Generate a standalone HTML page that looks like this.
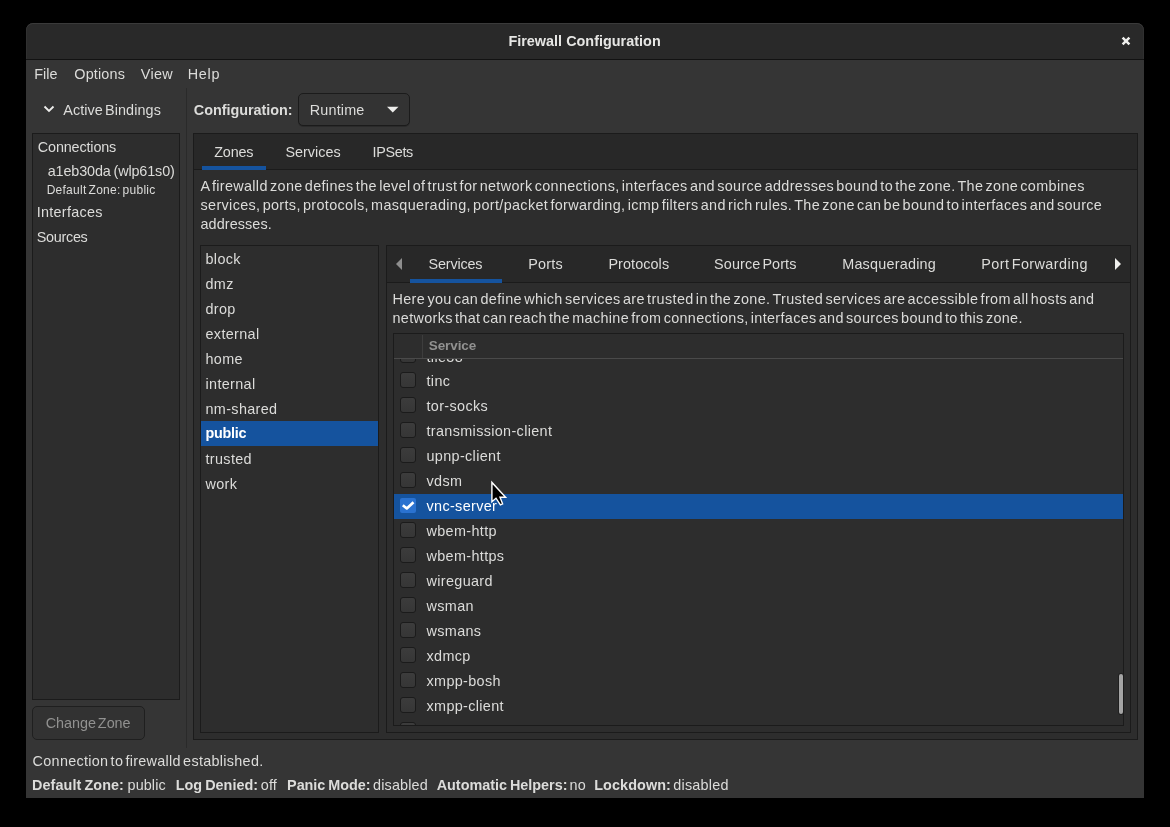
<!DOCTYPE html>
<html><head><meta charset="utf-8">
<style>
html,body{margin:0;padding:0;background:#000;width:1170px;height:827px;overflow:hidden}
body{font-family:"Liberation Sans",sans-serif;font-size:14.4px;color:#dcdcda;position:relative;-webkit-font-smoothing:antialiased;letter-spacing:0.35px;word-spacing:-2.1px}
#root{position:absolute;left:0;top:0;width:1170px;height:827px;will-change:transform}
.a{position:absolute}
.t{position:absolute;white-space:nowrap;line-height:20px;height:20px}
.b{font-weight:bold;letter-spacing:0.08px;word-spacing:-1px}
#win{position:absolute;left:26px;top:23px;width:1118px;height:775px;background:#353535;border-radius:7px 7px 0 0;overflow:hidden}
#title{position:absolute;left:0;top:0;width:1118px;height:36px;background:#292929;border-bottom:1px solid #121212;border-radius:7px 7px 0 0;box-shadow:inset 0 1px 0 #3a3a3a,inset 1px 0 0 #303030,inset -1px 0 0 #303030}
.frame{position:absolute;box-sizing:border-box;border:1px solid #1b1b1b;background:#2d2d2d}
.hdr{position:absolute;background:#282828;border-bottom:1px solid #1b1b1b;box-sizing:border-box}
.ul{position:absolute;background:#15539e;height:4px}
.sel{position:absolute;background:#15539e}
.cb{position:absolute;width:14px;height:14px;border:1px solid #1b1b1b;border-radius:3px;background:linear-gradient(#3c3c3c,#363636)}
</style></head><body><div id="root">
<div id="win">
  <div id="title"></div>
</div>
<!-- title -->
<div class="t b" style="left:508.40px;top:31px;color:#e6e6e4;letter-spacing:0.019px;word-spacing:0">Firewall Configuration</div>
<svg class="a" style="left:1121px;top:36px" width="10" height="10" viewBox="0 0 10 10"><path d="M1.6 1.6L8.4 8.4M8.4 1.6L1.6 8.4" stroke="#eeeeec" stroke-width="2.5" stroke-linecap="butt"/></svg>
<!-- menu -->
<div class="t" style="left:34.30px;top:64px;letter-spacing:-0.017px">File</div>
<div class="t" style="left:74.30px;top:64px;letter-spacing:0.167px">Options</div>
<div class="t" style="left:140.70px;top:64px;letter-spacing:0.350px">View</div>
<div class="t" style="left:187.70px;top:64px;letter-spacing:0.717px">Help</div>

<!-- left pane -->
<svg class="a" style="left:43px;top:104px" width="12" height="10" viewBox="0 0 12 10"><path d="M1.5 2.5L6 7L10.5 2.5" fill="none" stroke="#eeeeec" stroke-width="1.8"/></svg>
<div class="t" style="left:63.20px;top:100px;letter-spacing:0.100px">Active Bindings</div>
<div class="frame" style="left:32px;top:133px;width:148px;height:567px"></div>
<div class="t" style="left:37.80px;top:137px;letter-spacing:-0.150px">Connections</div>
<div class="t" style="left:47.70px;top:161px;letter-spacing:-0.133px;word-spacing:-1px">a1eb30da (wlp61s0)</div>
<div class="t" style="left:46.70px;top:179.5px;font-size:12px;letter-spacing:0.253px;word-spacing:-1.5px">Default Zone: public</div>
<div class="t" style="left:36.80px;top:202px;letter-spacing:0.261px">Interfaces</div>
<div class="t" style="left:36.80px;top:227px;letter-spacing:-0.300px">Sources</div>
<div class="a" style="left:32px;top:706px;width:113px;height:34px;box-sizing:border-box;border:1px solid #1f1f1f;border-radius:5px;background:#323232"></div>
<div class="t" style="left:45.70px;top:712.5px;color:#919190;letter-spacing:-0.020px">Change Zone</div>
<div class="a" style="left:186px;top:88px;width:1px;height:660px;background:#2a2a2a"></div>

<!-- config -->
<div class="t b" style="left:193.80px;top:100px;letter-spacing:-0.020px">Configuration:</div>
<div class="a" style="left:298px;top:93px;width:112px;height:33px;box-sizing:border-box;border:1px solid #1b1b1b;border-radius:5px;background:#333333;box-shadow:0 1px 0 rgba(0,0,0,.2)"></div>
<div class="t" style="left:309.70px;top:100px;letter-spacing:0.183px">Runtime</div>
<svg class="a" style="left:386px;top:106px" width="14" height="8" viewBox="0 0 14 8"><path d="M1 0.8H12.5L6.75 6.5Z" fill="#eeeeec"/></svg>

<!-- outer notebook -->
<div class="frame" style="left:193px;top:133px;width:945px;height:607px"></div>
<div class="hdr" style="left:194px;top:134px;width:943px;height:36px"></div>
<div class="ul" style="left:202px;top:166px;width:64px"></div>
<div class="t" style="left:214.30px;top:142px;letter-spacing:-0.225px">Zones</div>
<div class="t" style="left:285.40px;top:142px;letter-spacing:0.007px">Services</div>
<div class="t" style="left:372.50px;top:142px;letter-spacing:-0.330px">IPSets</div>
<div class="t" style="left:200.50px;top:176px;letter-spacing:0.343px">A firewalld zone defines the level of trust for network connections, interfaces and source addresses bound to the zone. The zone combines</div>
<div class="t" style="left:200.50px;top:195px;letter-spacing:0.349px">services, ports, protocols, masquerading, port/packet forwarding, icmp filters and rich rules. The zone can be bound to interfaces and source</div>
<div class="t" style="left:200.50px;top:213.7px;letter-spacing:0.094px">addresses.</div>

<!-- zone list -->
<div class="frame" style="left:200px;top:245px;width:179px;height:488px"></div>
<div class="sel" style="left:201px;top:421px;width:177px;height:25px"></div>
<div class="t" style="left:205.5px;top:248.6px">block</div>
<div class="t" style="left:205.5px;top:273.6px">dmz</div>
<div class="t" style="left:205.5px;top:298.6px">drop</div>
<div class="t" style="left:205.5px;top:323.6px">external</div>
<div class="t" style="left:205.5px;top:348.6px">home</div>
<div class="t" style="left:205.5px;top:373.6px">internal</div>
<div class="t" style="left:205.5px;top:398.6px">nm-shared</div>
<div class="t b" style="left:205.5px;top:423px;color:#fff;letter-spacing:-0.25px">public</div>
<div class="t" style="left:205.5px;top:448.6px">trusted</div>
<div class="t" style="left:205.5px;top:473.6px">work</div>

<!-- inner notebook -->
<div class="frame" style="left:386px;top:245px;width:745px;height:488px"></div>
<div class="hdr" style="left:387px;top:246px;width:743px;height:37px"></div>
<svg class="a" style="left:394px;top:257px" width="10" height="14" viewBox="0 0 10 14"><path d="M8 0.9V13.1L2 7Z" fill="#8e8e8e"/></svg>
<svg class="a" style="left:1113px;top:257px" width="10" height="14" viewBox="0 0 10 14"><path d="M2 0.9V13.1L8 7Z" fill="#eeeeec"/></svg>
<div class="ul" style="left:410px;top:279px;width:92px"></div>
<div class="t" style="left:428.50px;top:254px;letter-spacing:-0.164px">Services</div>
<div class="t" style="left:528.20px;top:254px;letter-spacing:0.200px">Ports</div>
<div class="t" style="left:608.40px;top:254px;letter-spacing:0.087px">Protocols</div>
<div class="t" style="left:714.10px;top:254px;letter-spacing:0.114px">Source Ports</div>
<div class="t" style="left:842.20px;top:254px;letter-spacing:0.223px">Masquerading</div>
<div class="t" style="left:981.30px;top:254px;letter-spacing:0.421px">Port Forwarding</div>
<div class="t" style="left:392.50px;top:289px;letter-spacing:0.362px">Here you can define which services are trusted in the zone. Trusted services are accessible from all hosts and</div>
<div class="t" style="left:392.50px;top:308px;letter-spacing:0.339px">networks that can reach the machine from connections, interfaces and sources bound to this zone.</div>

<!-- tree -->
<div class="frame" id="tree" style="left:393px;top:333px;width:731px;height:393px;overflow:hidden">
<div class="cb" style="left:6px;top:13px"></div>
<div class="t" style="left:32.5px;top:13px">tile38</div>
<div class="cb" style="left:6px;top:38px"></div>
<div class="t" style="left:32.5px;top:37px">tinc</div>
<div class="cb" style="left:6px;top:63px"></div>
<div class="t" style="left:32.5px;top:62px">tor-socks</div>
<div class="cb" style="left:6px;top:88px"></div>
<div class="t" style="left:32.5px;top:87px">transmission-client</div>
<div class="cb" style="left:6px;top:113px"></div>
<div class="t" style="left:32.5px;top:112px">upnp-client</div>
<div class="cb" style="left:6px;top:138px"></div>
<div class="t" style="left:32.5px;top:137px">vdsm</div>
<div class="sel" style="left:0;top:160px;width:729px;height:25px"></div>
<div class="a" style="left:6px;top:164px;width:16px;height:15px;box-sizing:border-box;border-radius:2px;background:#2a72d0"></div>
<svg class="a" style="left:6px;top:164px" width="16" height="16" viewBox="0 0 16 16"><path d="M2.8 7.2L6.8 10.5L13.5 4.2" fill="none" stroke="#fff" stroke-width="2.6" stroke-linejoin="round"/></svg>
<div class="t" style="left:32.5px;top:162px;color:#fff">vnc-server</div>
<div class="cb" style="left:6px;top:188px"></div>
<div class="t" style="left:32.5px;top:187px">wbem-http</div>
<div class="cb" style="left:6px;top:213px"></div>
<div class="t" style="left:32.5px;top:212px">wbem-https</div>
<div class="cb" style="left:6px;top:238px"></div>
<div class="t" style="left:32.5px;top:237px">wireguard</div>
<div class="cb" style="left:6px;top:263px"></div>
<div class="t" style="left:32.5px;top:262px">wsman</div>
<div class="cb" style="left:6px;top:288px"></div>
<div class="t" style="left:32.5px;top:287px">wsmans</div>
<div class="cb" style="left:6px;top:313px"></div>
<div class="t" style="left:32.5px;top:312px">xdmcp</div>
<div class="cb" style="left:6px;top:338px"></div>
<div class="t" style="left:32.5px;top:337px">xmpp-bosh</div>
<div class="cb" style="left:6px;top:363px"></div>
<div class="t" style="left:32.5px;top:362px">xmpp-client</div>
<div class="cb" style="left:6px;top:388px"></div>
<div class="t" style="left:32.5px;top:387px">xmpp-local</div>
<div class="a" style="left:0;top:0;width:729px;height:24px;background:#2d2d2d;border-bottom:1px solid #4a4a4a"></div>
<div class="a" style="left:28px;top:1px;width:1px;height:23px;background:#3d3d3d"></div>
<div class="t b" style="left:34.8px;top:2.2px;font-size:13.5px;color:#919190;letter-spacing:-0.1px">Service</div>
<div class="a" style="left:725px;top:340px;width:3.5px;height:40px;border-radius:2px;background:#a4a4a4;box-shadow:0 0 0 1px rgba(0,0,0,.3)"></div>
</div>

<!-- status -->
<div class="t" style="left:32.60px;top:750.5px;letter-spacing:0.301px">Connection to firewalld established.</div>
<div class="t b" style="left:32px;top:775px">Default Zone:</div>
<div class="t" style="left:127.60px;top:775px;letter-spacing:0.090px">public</div>
<div class="t b" style="left:175.70px;top:775px;letter-spacing:0.020px">Log Denied:</div>
<div class="t" style="left:260.80px;top:775px;letter-spacing:0.100px">off</div>
<div class="t b" style="left:287.10px;top:775px;letter-spacing:-0.040px">Panic Mode:</div>
<div class="t" style="left:373.10px;top:775px;letter-spacing:0.150px">disabled</div>
<div class="t b" style="left:436.70px;top:775px;letter-spacing:-0.008px">Automatic Helpers:</div>
<div class="t" style="left:569.60px;top:775px;letter-spacing:0.050px">no</div>
<div class="t b" style="left:594.20px;top:775px;letter-spacing:0.092px">Lockdown:</div>
<div class="t" style="left:673.20px;top:775px;letter-spacing:0.250px">disabled</div>
<!-- cursor -->
<svg class="a" style="left:489.6px;top:480.2px" width="20" height="28" viewBox="0 0 20 28"><path d="M1.9 2.4V21.8L6 18.2L10.4 24.8L12.6 23.8L10 17.2H15.6Z" fill="#000" stroke="#fff" stroke-width="1.4" stroke-linejoin="miter"/></svg>
</div></body></html>
